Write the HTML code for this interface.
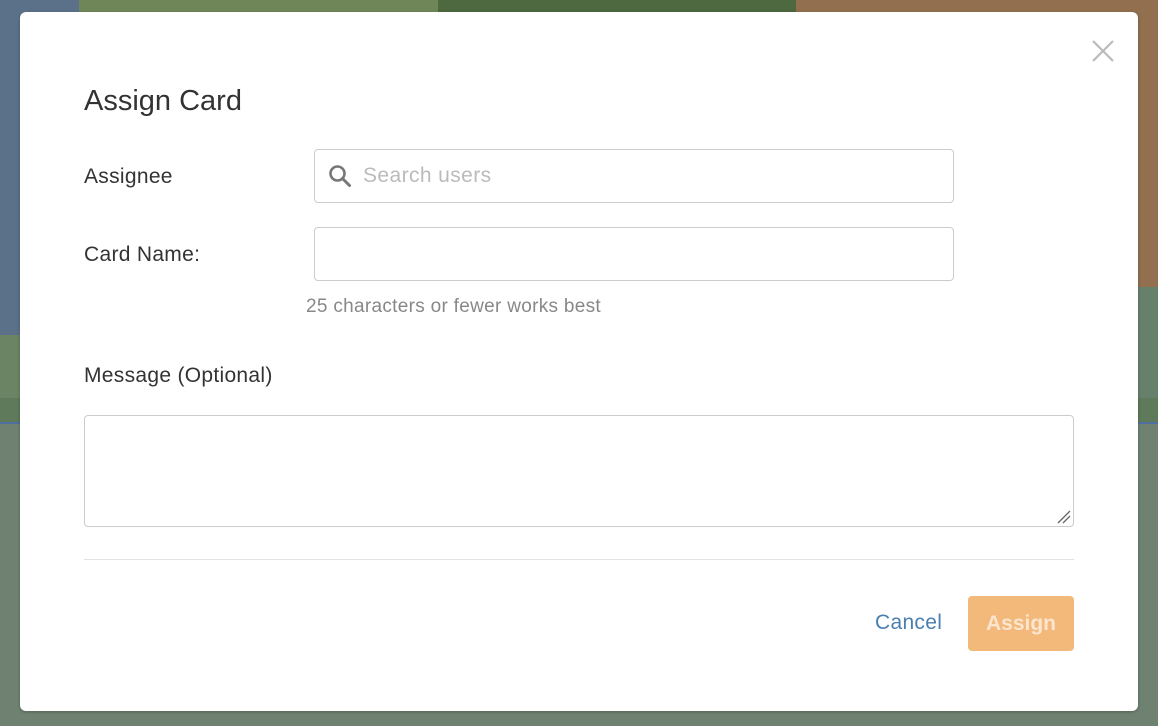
<!DOCTYPE html>
<html><head><meta charset="utf-8"><style>
*{box-sizing:border-box;margin:0;padding:0}
body{width:1158px;height:726px;overflow:hidden;position:relative;background:#6f8272;font-family:"Liberation Sans",sans-serif}
.b{position:absolute}
.modal{position:absolute;left:20px;top:12px;width:1118px;height:699px;background:#fff;border-radius:6px;box-shadow:0 1px 3px rgba(0,0,0,.25)}
.lbl{position:absolute;font-size:21px;color:#333;white-space:nowrap}
.inp{position:absolute;border:1px solid #ccc;border-radius:4px;background:#fff}
</style></head><body>
<div class="b" style="left:0;top:0;width:79px;height:335px;background:#5b7189"></div>
<div class="b" style="left:79px;top:0;width:359px;height:335px;background:#6f8659"></div>
<div class="b" style="left:438px;top:0;width:358px;height:335px;background:#4e683f"></div>
<div class="b" style="left:796px;top:0;width:362px;height:287px;background:#926f4e"></div>
<div class="b" style="left:796px;top:287px;width:362px;height:111px;background:#66806b"></div>
<div class="b" style="left:0;top:335px;width:796px;height:63px;background:#6b8463"></div>
<div class="b" style="left:0;top:398px;width:1158px;height:24px;background:#5e7a5a"></div>
<div class="b" style="left:0;top:422px;width:1158px;height:2px;background:#4f6fa0"></div>
<div class="modal">
  <svg style="position:absolute;left:1072px;top:28px" width="22" height="22" viewBox="0 0 22 22"><path d="M1 1L21 21M21 1L1 21" stroke="#bbb" stroke-width="2.2" fill="none"/></svg>
  <div class="lbl" style="left:64px;top:73px;font-size:29px">Assign Card</div>
  <div class="lbl" style="left:64px;top:153px;letter-spacing:0.3px">Assignee</div>
  <div class="inp" style="left:294px;top:137px;width:640px;height:54px">
    <svg style="position:absolute;left:13px;top:14px" width="24" height="24" viewBox="0 0 24 24"><circle cx="9.5" cy="9.5" r="7" stroke="#777" stroke-width="2.6" fill="none"/><path d="M14.5 14.5L21.5 21.5" stroke="#777" stroke-width="3" stroke-linecap="round"/></svg>
    <span style="position:absolute;left:48px;top:14px;font-size:21px;color:#bbb;letter-spacing:0.4px;white-space:nowrap">Search users</span>
  </div>
  <div class="lbl" style="left:64px;top:231px;letter-spacing:0.3px">Card Name:</div>
  <div class="inp" style="left:294px;top:215px;width:640px;height:54px"></div>
  <div class="lbl" style="left:286px;top:284px;font-size:19px;color:#888;letter-spacing:0.3px">25 characters or fewer works best</div>
  <div class="lbl" style="left:64px;top:352px;letter-spacing:0.3px">Message (Optional)</div>
  <div class="inp" style="left:64px;top:403px;width:990px;height:112px">
    <svg style="position:absolute;right:2px;bottom:2px" width="14" height="14" viewBox="0 0 14 14"><path d="M1 13L13 1M6 13L13 6" stroke="#666" stroke-width="1.3"/></svg>
  </div>
  <div class="b" style="left:64px;top:547px;width:990px;height:1px;background:#e3e3e3"></div>
  <div class="lbl" style="left:855px;top:599px;color:#4a7fb0;letter-spacing:0.3px">Cancel</div>
  <div class="b" style="left:948px;top:584px;width:106px;height:55px;background:#f3b97b;border-radius:4px;color:#fbe5cf;font-weight:bold;font-size:21px;text-align:center;line-height:55px">Assign</div>
</div>
</body></html>
